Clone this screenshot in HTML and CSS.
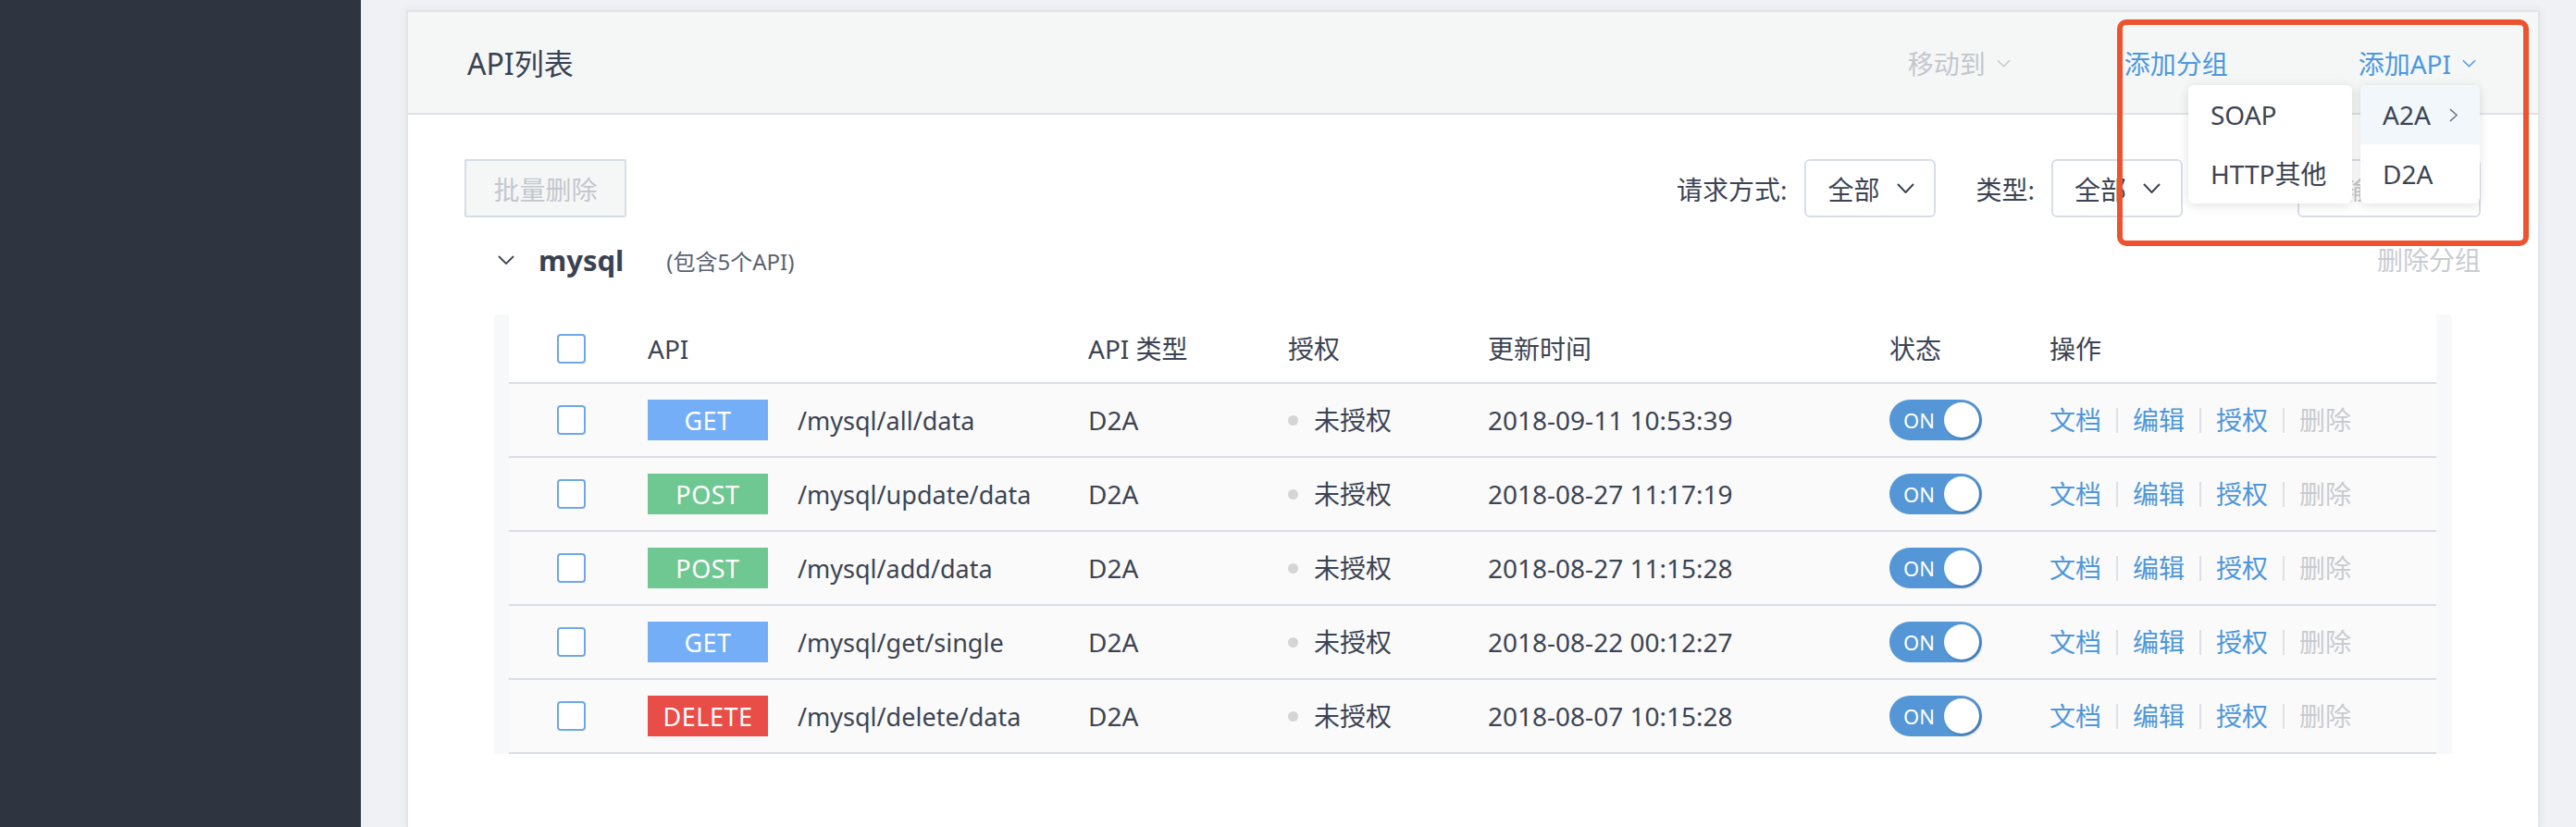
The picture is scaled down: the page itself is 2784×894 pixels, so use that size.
FILE: index.html
```html
<!DOCTYPE html>
<html lang="zh-CN">
<head>
<meta charset="utf-8">
<title>API列表</title>
<link rel="stylesheet" href="styles.css">
</head>
<body>
<div class="app">
  <aside class="sidebar"></aside>
  <main class="main">
    <section class="card">
      <header class="card-head">
        <h2 class="title">API列表</h2>
        <div class="head-actions">
          <span class="act act-move">移动到<svg class="chev-sm" viewBox="0 0 16 9"><polyline points="1,1 8,8 15,1"/></svg></span>
          <span class="act act-group">添加分组</span>
          <span class="act act-api">添加API<svg class="chev-sm" viewBox="0 0 16 9"><polyline points="1,1 8,8 15,1"/></svg></span>
        </div>
      </header>

      <div class="toolbar">
        <button class="btn-batch" type="button">批量删除</button>
        <div class="filters">
          <span class="flabel">请求方式:</span>
          <div class="select">全部<svg class="chev-sel" viewBox="0 0 19 11"><polyline points="1,1 9.5,10 18,1"/></svg></div>
          <span class="flabel flabel-type">类型:</span>
          <div class="select">全部<svg class="chev-sel" viewBox="0 0 19 11"><polyline points="1,1 9.5,10 18,1"/></svg></div>
          <div class="search">请输入API</div>
        </div>
      </div>

      <div class="group-row">
        <div class="group-left">
          <svg class="chev-group" viewBox="0 0 18 10"><polyline points="1,1 9,9 17,1"/></svg>
          <span class="group-name">mysql</span>
          <span class="group-count">(包含5个API)</span>
        </div>
        <span class="group-del">删除分组</span>
      </div>

      <div class="table-wrap">
        <div class="table">
          <div class="tr th">
            <div class="td"><span class="cb"></span></div>
            <div class="td">API</div>
            <div class="td">API 类型</div>
            <div class="td">授权</div>
            <div class="td">更新时间</div>
            <div class="td">状态</div>
            <div class="td">操作</div>
          </div>

          <div class="tr">
            <div class="td"><span class="cb"></span></div>
            <div class="td"><span class="badge get">GET</span><span class="path">/mysql/all/data</span></div>
            <div class="td">D2A</div>
            <div class="td"><span class="dot"></span>未授权</div>
            <div class="td">2018-09-11 10:53:39</div>
            <div class="td"><span class="toggle"><span class="on">ON</span><span class="knob"></span></span></div>
            <div class="td ops"><a class="op">文档</a><i class="sep"></i><a class="op">编辑</a><i class="sep"></i><a class="op">授权</a><i class="sep"></i><a class="op op-off">删除</a></div>
          </div>

          <div class="tr">
            <div class="td"><span class="cb"></span></div>
            <div class="td"><span class="badge post">POST</span><span class="path">/mysql/update/data</span></div>
            <div class="td">D2A</div>
            <div class="td"><span class="dot"></span>未授权</div>
            <div class="td">2018-08-27 11:17:19</div>
            <div class="td"><span class="toggle"><span class="on">ON</span><span class="knob"></span></span></div>
            <div class="td ops"><a class="op">文档</a><i class="sep"></i><a class="op">编辑</a><i class="sep"></i><a class="op">授权</a><i class="sep"></i><a class="op op-off">删除</a></div>
          </div>

          <div class="tr">
            <div class="td"><span class="cb"></span></div>
            <div class="td"><span class="badge post">POST</span><span class="path">/mysql/add/data</span></div>
            <div class="td">D2A</div>
            <div class="td"><span class="dot"></span>未授权</div>
            <div class="td">2018-08-27 11:15:28</div>
            <div class="td"><span class="toggle"><span class="on">ON</span><span class="knob"></span></span></div>
            <div class="td ops"><a class="op">文档</a><i class="sep"></i><a class="op">编辑</a><i class="sep"></i><a class="op">授权</a><i class="sep"></i><a class="op op-off">删除</a></div>
          </div>

          <div class="tr">
            <div class="td"><span class="cb"></span></div>
            <div class="td"><span class="badge get">GET</span><span class="path">/mysql/get/single</span></div>
            <div class="td">D2A</div>
            <div class="td"><span class="dot"></span>未授权</div>
            <div class="td">2018-08-22 00:12:27</div>
            <div class="td"><span class="toggle"><span class="on">ON</span><span class="knob"></span></span></div>
            <div class="td ops"><a class="op">文档</a><i class="sep"></i><a class="op">编辑</a><i class="sep"></i><a class="op">授权</a><i class="sep"></i><a class="op op-off">删除</a></div>
          </div>

          <div class="tr">
            <div class="td"><span class="cb"></span></div>
            <div class="td"><span class="badge del">DELETE</span><span class="path">/mysql/delete/data</span></div>
            <div class="td">D2A</div>
            <div class="td"><span class="dot"></span>未授权</div>
            <div class="td">2018-08-07 10:15:28</div>
            <div class="td"><span class="toggle"><span class="on">ON</span><span class="knob"></span></span></div>
            <div class="td ops"><a class="op">文档</a><i class="sep"></i><a class="op">编辑</a><i class="sep"></i><a class="op">授权</a><i class="sep"></i><a class="op op-off">删除</a></div>
          </div>
        </div>
      </div>

      <div class="menus">
        <ul class="menu menu-1">
          <li class="mi">SOAP</li>
          <li class="mi">HTTP其他</li>
        </ul>
        <ul class="menu menu-2">
          <li class="mi mi-active">A2A<svg class="chev-right" viewBox="0 0 11 16"><polyline points="1,1 9,8 1,15"/></svg></li>
          <li class="mi">D2A</li>
        </ul>
      </div>

      <div class="highlight"></div>
    </section>
  </main>
</div>
</body>
</html>
```

FILE: styles.css
```css
* { box-sizing: border-box; }

html, body {
  margin: 0;
  padding: 0;
  height: 100%;
}

body {
  font-family: "Noto Sans", "Noto Sans CJK SC", sans-serif;
  font-size: 28px;
  color: #3c4453;
  overflow: hidden;
  background: #eff1f4;
}

.app {
  display: flex;
  height: 894px;
}

.sidebar {
  width: 390px;
  flex: 0 0 390px;
  background: #2e3440;
}

.main {
  flex: 1;
  padding: 11px 39px 0 49px;
  background: #eff1f4;
  display: flex;
}

.card {
  position: relative;
  flex: 1;
  background: #fff;
  border: 2px solid #e1e5e9;
  border-bottom: none;
  box-shadow: 0 0 10px rgba(0, 0, 0, 0.06);
}

/* header */
.card-head {
  height: 111px;
  background: #f5f7f7;
  border-bottom: 2px solid #dde2e6;
  display: flex;
  align-items: center;
  justify-content: space-between;
  padding: 0 67px 0 64px;
}

.title {
  margin: 0;
  font-size: 32px;
  font-weight: normal;
  color: #3a4252;
  line-height: 1;
  padding-top: 2px;
}

.head-actions {
  display: flex;
  align-items: center;
  line-height: 1;
  padding-top: 2px;
}

.act {
  display: flex;
  align-items: center;
  font-size: 28px;
}

.act-move { color: #c3c7cd; }
.act-group { color: #4b98e0; margin-left: 123px; }
.act-api { color: #4b98e0; margin-left: 141px; }

.chev-sm {
  width: 15px;
  height: 9px;
  margin-left: 12px;
  fill: none;
  stroke: currentColor;
  stroke-width: 1.6;
}

/* toolbar */
.toolbar {
  margin-top: 48px;
  height: 63px;
  padding: 0 62px 0 61px;
  display: flex;
  align-items: center;
  justify-content: space-between;
}

.btn-batch {
  width: 175px;
  height: 63px;
  background: #f5f7f7;
  border: 2px solid #d6dce4;
  border-radius: 2px;
  color: #c3c7cd;
  font-family: inherit;
  font-size: 28px;
  padding: 0;
}

.filters {
  display: flex;
  align-items: center;
  height: 63px;
}

.flabel {
  color: #3c4453;
  margin-right: 19px;
}

.flabel-type { margin-left: 43px; margin-right: 18px; }

.select {
  height: 63px;
  width: 142px;
  border: 2px solid #d8dde6;
  border-radius: 6px;
  background: #fff;
  display: flex;
  align-items: center;
  padding: 0 0 0 23px;
  color: #3c4453;
}

.chev-sel {
  width: 19px;
  height: 11px;
  margin-left: 18px;
  fill: none;
  stroke: #3c4453;
  stroke-width: 2;
}

.search {
  margin-left: 124px;
  width: 198px;
  height: 63px;
  border: 2px solid #d8dde6;
  border-radius: 6px;
  background: #fff;
  display: flex;
  align-items: center;
  padding-left: 20px;
  color: #c3c7cd;
  white-space: nowrap;
}

/* group row */
.group-row {
  margin-top: 20px;
  height: 56px;
  padding: 0 62px 0 97px;
  display: flex;
  align-items: center;
  justify-content: space-between;
}

.group-left {
  display: flex;
  align-items: center;
}

.chev-group {
  width: 18px;
  height: 10px;
  fill: none;
  stroke: #3c4453;
  stroke-width: 1.8;
  margin-top: -4px;
}

.group-name {
  margin-left: 26px;
  font-size: 31px;
  font-weight: bold;
  color: #3a4252;
  line-height: 1;
  margin-top: -4px;
}

.group-count {
  margin-left: 46px;
  font-size: 24px;
  color: #5a6272;
  line-height: 1;
}

.group-del {
  color: #c8ccd2;
  font-size: 28px;
  line-height: 1;
  margin-top: -4px;
}

/* table */
.table-wrap {
  margin: 29px 93px 0;
  background: #f7f8f9;
  padding: 0 17px 0 16px;
  border-radius: 4px 4px 0 0;
}

.tr {
  display: grid;
  grid-template-columns: 150px 476px 216px 216px 434px 173px 1fr;
  height: 80px;
  background: #fafafa;
  border-bottom: 2px solid #d9dde6;
  align-items: center;
}

.tr.th {
  height: 75px;
  background: #fff;
}

.td {
  display: flex;
  align-items: center;
  white-space: nowrap;
  line-height: 1;
}

.td:first-child { padding-left: 52px; }

.cb {
  display: inline-block;
  width: 31px;
  height: 32px;
  border: 2px solid #6fa7e8;
  border-radius: 4px;
  background: #fff;
}

.badge {
  display: inline-flex;
  align-items: center;
  justify-content: center;
  width: 130px;
  height: 44px;
  color: #fff;
  font-size: 27px;
  letter-spacing: 0.5px;
}

.badge.get { background: #74aef7; }
.badge.post { background: #6fc891; }
.badge.del { background: #e84d47; }

.path {
  margin-left: 32px;
  font-size: 27px;
}

.dot {
  width: 11px;
  height: 11px;
  border-radius: 50%;
  background: #d5d5d5;
  margin-right: 17px;
}

.toggle {
  position: relative;
  display: inline-flex;
  align-items: center;
  width: 100px;
  height: 44px;
  border-radius: 22px;
  background: #5597d6;
}

.toggle .on {
  color: #fff;
  font-size: 22px;
  margin-left: 15px;
}

.toggle .knob {
  position: absolute;
  right: 3px;
  top: 3px;
  width: 38px;
  height: 38px;
  border-radius: 50%;
  background: #fff;
  box-shadow: 2px 2px 3px rgba(30, 60, 100, 0.35);
}

.ops { color: #4f97da; }

.op { color: #4f97da; }
.op-off { color: #c8cbd0; }

.sep {
  display: inline-block;
  width: 2px;
  height: 27px;
  background: #dde1e6;
  margin: 0 16px;
}

/* dropdown menus (overlay) */
.menus {
  position: absolute;
  top: 79px;
  right: 63px;
  display: flex;
  gap: 9px;
  z-index: 5;
}

.menu {
  list-style: none;
  margin: 0;
  padding: 0;
  background: #fff;
  border-radius: 6px;
  box-shadow: 0 2px 12px rgba(0, 0, 0, 0.12);
  overflow: hidden;
}

.menu-1 { width: 177px; }
.menu-2 { width: 129px; }

.mi {
  height: 64px;
  display: flex;
  align-items: center;
  justify-content: space-between;
  padding: 0 23px 0 24px;
  color: #3c4453;
  white-space: nowrap;
  line-height: 1;
}

.mi-active { background: #f1f7fb; }

.chev-right {
  width: 10px;
  height: 15px;
  fill: none;
  stroke: #6a7180;
  stroke-width: 1.5;
}

/* annotation frame */
.highlight {
  position: absolute;
  top: 8px;
  right: 10px;
  width: 445px;
  height: 245px;
  border: 6px solid #ee5330;
  border-radius: 10px;
  z-index: 6;
  pointer-events: none;
}
```
